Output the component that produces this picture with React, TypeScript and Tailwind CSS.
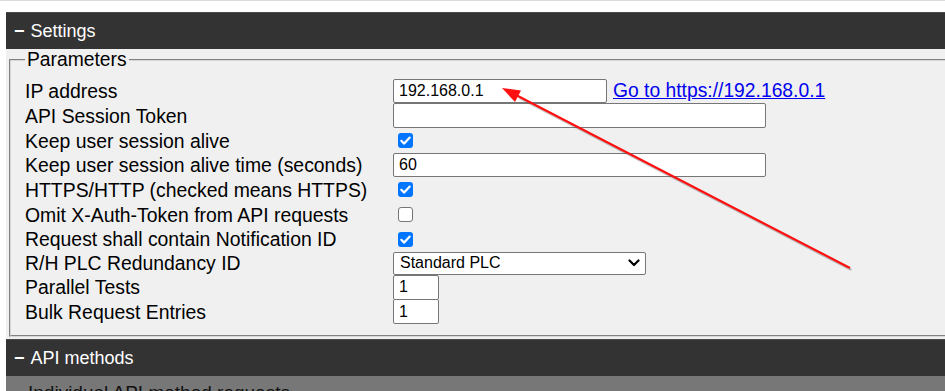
import React from "react";

function Check({ checked }: { checked: boolean }) {
  if (!checked) {
    return (
      <div className="ml-[5px] w-[15px] h-[15px] rounded-[3px] border border-[#767676] bg-white" />
    );
  }
  return (
    <div className="ml-[5px] w-[15px] h-[15px] rounded-[3px] bg-[#0075ff] flex items-center justify-center">
      <svg width="15" height="15" viewBox="0 0 15 15">
        <path d="M3.3 7.8 L6.2 10.6 L11.7 4.6" fill="none" stroke="white" strokeWidth="2.2" strokeLinecap="round" strokeLinejoin="round" />
      </svg>
    </div>
  );
}

function TextInput({ value, w, h = 24 }: { value: string; w: string; h?: number }) {
  return (
    <div
      className={`${w} bg-white border border-[#767676] rounded-[2px] flex items-center pl-[5px] text-[16px] text-black`}
      style={{ height: h }}
    >
      {value}
    </div>
  );
}

type Row = { label: string; h: number; control: React.ReactNode };

export default function App() {
  const rows: Row[] = [
    {
      label: "IP address",
      h: 25,
      control: (
        <div className="flex items-center">
          <TextInput value="192.168.0.1" w="w-[214px]" h={24} />
          <a className="ml-[6px] text-[19.3px] text-[#0000ee] underline leading-[22px]" href="#">
            Go to https://192.168.0.1
          </a>
        </div>
      ),
    },
    { label: "API Session Token", h: 25, control: <TextInput value="" w="w-[373px]" h={25} /> },
    { label: "Keep user session alive", h: 25, control: <Check checked /> },
    { label: "Keep user session alive time (seconds)", h: 24, control: <TextInput value="60" w="w-[373px]" h={24} /> },
    { label: "HTTPS/HTTP (checked means HTTPS)", h: 25, control: <Check checked /> },
    { label: "Omit X-Auth-Token from API requests", h: 25, control: <Check checked={false} /> },
    { label: "Request shall contain Notification ID", h: 24, control: <Check checked /> },
    {
      label: "R/H PLC Redundancy ID",
      h: 24,
      control: (
        <div className="w-[253px] h-[23px] bg-white border border-[#767676] rounded-[2px] flex items-center justify-between pl-[6px] pr-[5px] text-[16px] text-black">
          <span>Standard PLC</span>
          <svg width="12" height="8" viewBox="0 0 12 8">
            <path d="M1.5 1.5 L6 6 L10.5 1.5" fill="none" stroke="black" strokeWidth="2.2" strokeLinecap="round" strokeLinejoin="round" />
          </svg>
        </div>
      ),
    },
    { label: "Parallel Tests", h: 24, control: <TextInput value="1" w="w-[46px]" h={25} /> },
    { label: "Bulk Request Entries", h: 25, control: <TextInput value="1" w="w-[46px]" h={25} /> },
  ];

  return (
    <div className="relative w-[945px] h-[391px] overflow-hidden bg-white font-['Liberation_Sans',Arial,sans-serif]">
      <div className="h-[12px] border-t border-[#dcdcdc]" />
      <div className="ml-[6px]">
        <div className="h-[37px] bg-[#333333] border-t border-[#4a4a4a] flex items-center pl-[8px] text-white text-[18px]">
          <span className="font-bold mr-[6px]">−</span>
          <span>Settings</span>
        </div>
        <div className="bg-[#f0f0f0] pl-[3px] pb-[2px]">
          <fieldset className="w-[960px] border-2 [border-style:groove] border-[#d6d6d6] pl-[14px] pb-[11px]">
            <legend className="px-[2px] text-[19.3px] leading-[22px] text-black">Parameters</legend>
            <div className="mt-[7px] flex flex-col">
              {rows.map((r) => (
                <div key={r.label} className="flex items-center" style={{ height: r.h }}>
                  <div className="w-[368px] text-[19.4px] text-black leading-[22px] whitespace-nowrap">{r.label}</div>
                  {r.control}
                </div>
              ))}
            </div>
          </fieldset>
        </div>
        <div className="h-[37px] bg-[#333333] border-t border-[#4a4a4a] flex items-center pl-[8px] text-white text-[18px]">
          <span className="font-bold mr-[6px]">−</span>
          <span>API methods</span>
        </div>
        <div className="h-[40px] bg-[#777777] pl-[22px] pt-[6px] text-[19px] leading-[22px] text-[#111]">
          Individual API method requests
        </div>
      </div>

      <svg className="absolute left-0 top-0 pointer-events-none" width="945" height="391" viewBox="0 0 945 391">
        <g opacity="0.35" transform="translate(1.5,2)">
          <line x1="850" y1="268" x2="518" y2="96" stroke="#555" strokeWidth="2.5" />
        </g>
        <line x1="850" y1="268" x2="516" y2="95" stroke="#ff1010" strokeWidth="2.2" />
        <polygon points="502,88 521,90.5 515,102" fill="#ff1010" />
      </svg>
    </div>
  );
}
